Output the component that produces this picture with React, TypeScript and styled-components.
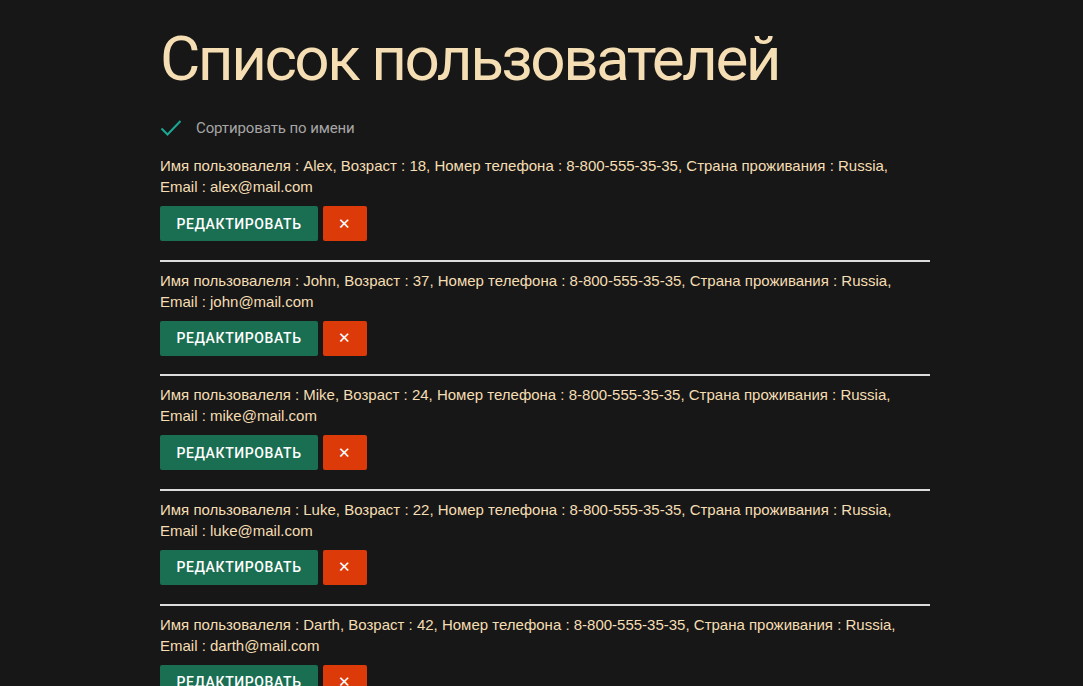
import React from "react";
import styled, { createGlobalStyle } from "styled-components";

const Global = createGlobalStyle`
  html, body { margin: 0; padding: 0; background: #171717; }
  body { font-family: Roboto, "Noto Sans", sans-serif; color: #f5deb3; }
`;

const Page = styled.div`
  width: 770px;
  margin: 0 auto 0 160px;
  padding-top: 19px;
`;

const Title = styled.h1`
  margin: 0;
  font-family: Roboto, sans-serif;
  font-size: 62px;
  font-weight: 400;
  letter-spacing: -2.5px;
  line-height: 80px;
  color: #f5deb3;
`;

const SortRow = styled.label`
  display: flex;
  align-items: center;
  gap: 14px;
  height: 26px;
  margin-top: 16px;
  margin-bottom: 14px;
  font-family: Roboto, sans-serif;
  font-size: 15px;
  letter-spacing: -0.1px;
  color: #a6a6a6;
  cursor: pointer;
`;

const List = styled.div`
  display: flex;
  flex-direction: column;
`;

const Item = styled.div`
  display: flex;
  flex-direction: column;
  padding-top: 8px;
  padding-bottom: 18.67px;
  border-bottom: 2px solid #dcdcdc;
  &:first-child { padding-top: 0; }
`;

const Info = styled.div`
  max-width: 756px;
  font-family: "Liberation Sans", Arial, sans-serif;
  font-size: 15px;
  line-height: 21px;
  color: #f5deb3;
`;

const Actions = styled.div`
  display: flex;
  gap: 5px;
  margin-top: 9px;
`;

const Button = styled.button<{ $variant: "edit" | "delete" }>`
  height: 35px;
  border: none;
  border-radius: 2px;
  padding: 0;
  width: ${(p) => (p.$variant === "edit" ? "158px" : "44px")};
  background: ${(p) => (p.$variant === "edit" ? "#1a6e52" : "#dd3a0a")};
  color: #ffffff;
  font-family: Roboto, sans-serif;
  font-size: ${(p) => (p.$variant === "edit" ? "14px" : "15px")};
  font-weight: 500;
  letter-spacing: 0.6px;
  text-transform: uppercase;
  cursor: pointer;
`;

const users = [
  { name: "Alex", age: 18 },
  { name: "John", age: 37 },
  { name: "Mike", age: 24 },
  { name: "Luke", age: 22 },
  { name: "Darth", age: 42 },
];

export default function App() {
  return (
    <>
      <Global />
      <Page>
        <Title>Список пользователей</Title>
        <SortRow>
          <svg width="22" height="18" viewBox="0 0 22 18">
            <path d="M1.5 9.5 L7.5 15.5 L20.5 2" fill="none" stroke="#1aa894" strokeWidth="2" />
          </svg>
          Сортировать по имени
        </SortRow>
        <List>
          {users.map((u) => (
            <Item key={u.name}>
              <Info>
                Имя пользовалеля : {u.name}, Возраст : {u.age}, Номер телефона : 8-800-555-35-35, Страна проживания : Russia, Email : {u.name.toLowerCase()}@mail.com
              </Info>
              <Actions>
                <Button $variant="edit">Редактировать</Button>
                <Button $variant="delete">✕</Button>
              </Actions>
            </Item>
          ))}
        </List>
      </Page>
    </>
  );
}
